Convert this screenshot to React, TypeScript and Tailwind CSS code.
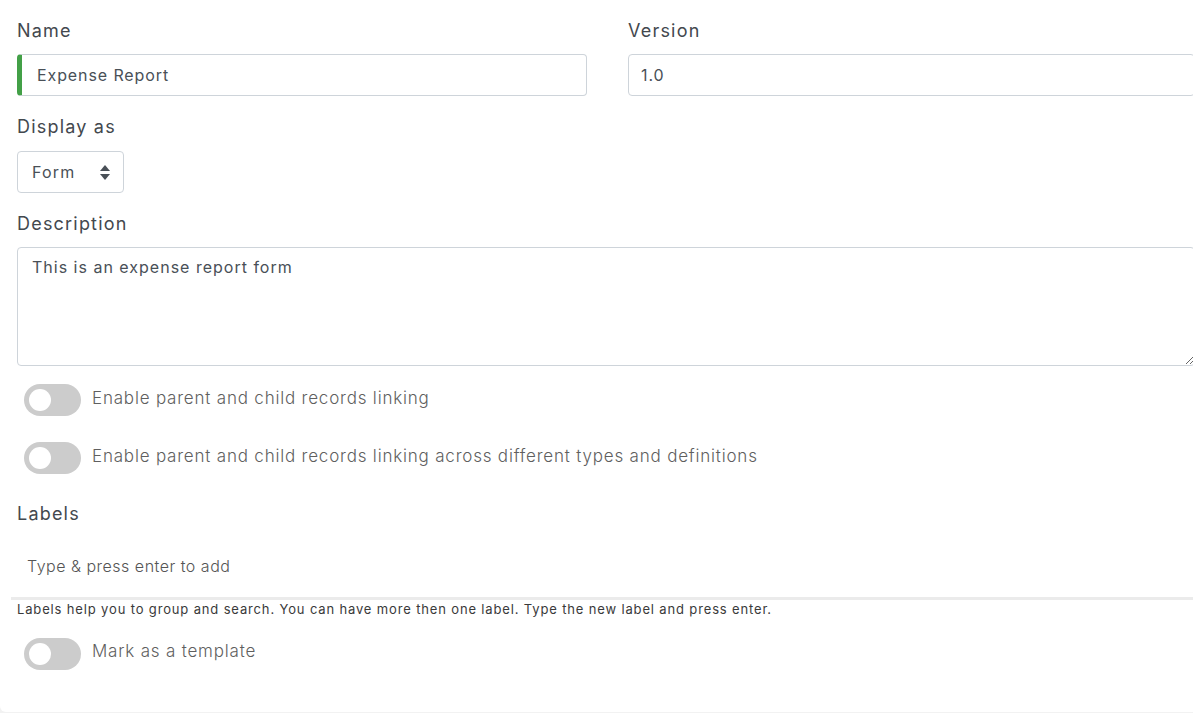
import React, { useState } from 'react';

const font = { fontFamily: '"Inter", "Open Sans", sans-serif' };

const Toggle: React.FC<{ label: string }> = ({ label }) => {
  const [on, setOn] = useState(false);
  return (
    <label className="flex items-center gap-[11px] pl-[7px] cursor-pointer">
      <button
        type="button"
        onClick={() => setOn(!on)}
        className={`relative w-[57px] h-[32px] rounded-full shrink-0 ${on ? 'bg-[#4caf50]' : 'bg-[#cccccc]'}`}
      >
        <span
          className={`absolute top-[5px] w-[22px] h-[22px] rounded-full bg-white ${on ? 'left-[30px]' : 'left-[5px]'}`}
        />
      </button>
      <span className="text-[17px] font-light tracking-[0.8px] text-[#5f5f5f] -mt-[3px]">{label}</span>
    </label>
  );
};

export default function App() {
  return (
    <div className="w-[1193px] h-[713px] overflow-hidden bg-[#f2f2f2]" style={font}>
      <div className="w-[1231px] h-[712px] bg-white rounded-b-[6px] pl-[17px] pr-[36px] pt-[18px]">
        {/* Name / Version */}
        <div className="grid grid-cols-[570px_1fr] gap-x-[41px]">
          <div>
            <div className="text-[18px] tracking-[1.2px] text-[#43484e] h-[26px] leading-[26px]">Name</div>
            <div className="mt-[10px] h-[42px] flex items-center border border-[#ced4da] border-l-[5px] border-l-[#43a047] rounded-[4px] pl-[15px] text-[16px] tracking-[0.9px] text-[#495057]">
              Expense Report
            </div>
          </div>
          <div>
            <div className="text-[18px] tracking-[1.2px] text-[#43484e] h-[26px] leading-[26px]">Version</div>
            <div className="mt-[10px] h-[42px] flex items-center border border-[#ced4da] rounded-[4px] pl-[12px] text-[16px] tracking-[0.9px] text-[#495057]">
              1.0
            </div>
          </div>
        </div>

        {/* Display as */}
        <div className="mt-[18px] text-[18px] tracking-[1.2px] text-[#43484e] h-[26px] leading-[26px]">Display as</div>
        <div className="mt-[11px] w-[107px] h-[42px] flex items-center justify-between border border-[#ced4da] rounded-[4px] pl-[14px] pr-[13px] text-[16px] tracking-[1.2px] text-[#495057]">
          <span>Form</span>
          <svg width="10" height="15" viewBox="0 0 10 15" fill="#495057">
            <path d="M5 0 L10 6 L0 6 Z" />
            <path d="M0 9 L10 9 L5 15 Z" />
          </svg>
        </div>

        {/* Description */}
        <div className="mt-[18px] text-[18px] tracking-[1.2px] text-[#43484e] h-[26px] leading-[26px]">Description</div>
        <textarea
          defaultValue="This is an expense report form"
          className="mt-[10px] block w-full h-[119px] border border-[#ced4da] rounded-[4px] px-[14px] py-[7px] text-[16px] tracking-[1px] text-[#495057] outline-none"
        />

        {/* Toggles */}
        <div className="mt-[18px]">
          <Toggle label="Enable parent and child records linking" />
        </div>
        <div className="mt-[26px]">
          <Toggle label="Enable parent and child records linking across different types and definitions" />
        </div>

        {/* Labels */}
        <div className="mt-[27px] text-[18px] tracking-[1.2px] text-[#43484e] h-[26px] leading-[26px]">Labels</div>
        <div className="-ml-[6px] mt-[16px] border-b-[3px] border-[#ebebeb] h-[57px] pl-[16px] pt-[11px]">
          <input
            placeholder="Type & press enter to add"
            className="w-full outline-none text-[16px] font-light tracking-[0.5px] placeholder:text-[#555]"
          />
        </div>
        <div className="text-[13px] text-[#3a3a3a] tracking-[0.85px]">
          Labels help you to group and search. You can have more then one label. Type the new label and press enter.
        </div>

        <div className="mt-[18px]">
          <Toggle label="Mark as a template" />
        </div>
      </div>
    </div>
  );
}
